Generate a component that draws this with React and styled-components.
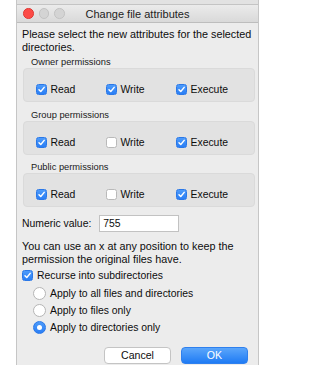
import styled, { createGlobalStyle } from "styled-components";

const Global = createGlobalStyle`
  html, body {
    margin: 0;
    padding: 0;
    background: #ffffff;
  }
  body {
    font-family: "Liberation Sans", Arial, sans-serif;
    color: #0d0d0d;
  }
`;

const Window = styled.div`
  margin-left: 16px;
  width: 243px;
  height: 365px;
  box-sizing: border-box;
  background: #ececec;
  border-left: 1px solid #c6c6c6;
  border-right: 1px solid #c6c6c6;
  display: flex;
  flex-direction: column;
`;

const TopStrip = styled.div`
  height: 4px;
  background: #e2e2e2;
  border-bottom: 1px solid #c4c4c4;
`;

const TitleBar = styled.div`
  height: 17px;
  display: flex;
  align-items: center;
  position: relative;
  background: linear-gradient(#ebebeb, #d9d9d9);
  border-bottom: 1px solid #bdbdbd;
`;

const Lights = styled.div`
  display: flex;
  gap: 5px;
  padding-left: 6px;
`;

const Light = styled.span`
  width: 10.5px;
  height: 10.5px;
  border-radius: 50%;
  box-sizing: border-box;
  background: ${(p) => (p.$red ? "#fc4b46" : "#d4d4d4")};
  border: 1px solid ${(p) => (p.$red ? "#df3a35" : "#c3c3c3")};
`;

const Title = styled.div`
  position: absolute;
  left: 0;
  right: 0;
  text-align: center;
  font-size: 11px;
  color: #222;
  pointer-events: none;
`;

const Body = styled.div`
  padding: 5px 0 0 5px;
  display: flex;
  flex-direction: column;
`;

const Para = styled.p`
  margin: ${(p) => p.$mt || 0}px 0 0;
  font-size: 10.8px;
  line-height: 13px;
  white-space: nowrap;
  color: #0d0d0d;
`;

const SectionLabel = styled.div`
  margin-top: ${(p) => p.$mt}px;
  margin-left: 9px;
  height: 11px;
  line-height: 11px;
  font-size: 9.3px;
  color: #1a1a1a;
`;

const Group = styled.div`
  margin-left: 1px;
  width: 232px;
  height: 34px;
  box-sizing: border-box;
  padding: 15px 0 0 11.5px;
  background: #e2e2e2;
  border: 1px solid #dadada;
  border-radius: 4px;
  display: grid;
  grid-template-columns: 70px 70px 70px;
  align-items: start;
`;

const Option = styled.label`
  display: flex;
  align-items: center;
  gap: 4px;
  font-size: 10.4px;
  height: ${(p) => p.$h || 11}px;
  line-height: 11px;
  white-space: nowrap;
  color: #0d0d0d;
  margin: ${(p) => p.$m || 0};
`;

const Box = styled.span`
  width: 11px;
  height: 11px;
  flex: none;
  box-sizing: border-box;
  border-radius: 2.5px;
  display: flex;
  align-items: center;
  justify-content: center;
  background: ${(p) => (p.$on ? "linear-gradient(#4d9bfa, #2a7ef5)" : "#ffffff")};
  border: 1px solid ${(p) => (p.$on ? "#2a78e8" : "#b9b9b9")};
`;

const Check = ({ on }) => (
  <Box $on={on}>
    {on && (
      <svg width="9" height="9" viewBox="0 0 10 10">
        <path d="M2.2 5.2 L4.2 7.3 L8 2.6" fill="none" stroke="#fff" strokeWidth="1.6" strokeLinecap="round" strokeLinejoin="round" />
      </svg>
    )}
  </Box>
);

const Dot = styled.span`
  width: 13px;
  height: 13px;
  flex: none;
  box-sizing: border-box;
  border-radius: 50%;
  display: flex;
  align-items: center;
  justify-content: center;
  background: ${(p) => (p.$on ? "linear-gradient(#4d9bfa, #2a7ef5)" : "#ffffff")};
  border: 1px solid ${(p) => (p.$on ? "#2a78e8" : "#b5b5b5")};
  &::after {
    content: "";
    display: ${(p) => (p.$on ? "block" : "none")};
    width: 5px;
    height: 5px;
    border-radius: 50%;
    background: #fff;
  }
`;

const NumRow = styled.div`
  margin-top: 8px;
  display: flex;
  align-items: center;
  gap: 8px;
  font-size: 10.4px;
  color: #0d0d0d;
`;

const NumInput = styled.div`
  width: 80px;
  height: 17px;
  box-sizing: border-box;
  background: #fff;
  border: 1px solid #c2c2c2;
  padding-left: 3px;
  display: flex;
  align-items: center;
  font-size: 10.4px;
`;

const Radios = styled.div`
  margin: 6px 0 0 12px;
  display: flex;
  flex-direction: column;
  gap: 4px;
`;

const Buttons = styled.div`
  margin-top: 12.5px;
  padding-right: 10px;
  display: flex;
  justify-content: flex-end;
  gap: 10px;
`;

const Button = styled.div`
  width: 67px;
  height: 17px;
  box-sizing: border-box;
  border-radius: 4px;
  display: flex;
  align-items: center;
  justify-content: center;
  font-size: 10.6px;
  color: ${(p) => (p.$primary ? "#fff" : "#0d0d0d")};
  background: ${(p) => (p.$primary ? "linear-gradient(#5ba6fb, #1f7bf4)" : "#fff")};
  border: 1px solid ${(p) => (p.$primary ? "#2f80ee" : "#c4c4c4")};
`;

const sections = [
  { label: "Owner permissions", mt: 3, values: [true, true, true] },
  { label: "Group permissions", mt: 7.5, values: [true, false, true] },
  { label: "Public permissions", mt: 7.5, values: [true, false, true] },
];

const names = ["Read", "Write", "Execute"];

export default function App() {
  return (
    <>
      <Global />
      <Window>
        <TopStrip />
        <TitleBar>
          <Lights>
            <Light $red />
            <Light />
            <Light />
          </Lights>
          <Title>Change file attributes</Title>
        </TitleBar>
        <Body>
          <Para>
            Please select the new attributes for the selected
            <br />
            directories.
          </Para>

          {sections.map((s) => (
            <div key={s.label}>
              <SectionLabel $mt={s.mt}>{s.label}</SectionLabel>
              <Group>
                {names.map((n, i) => (
                  <Option key={n}>
                    <Check on={s.values[i]} />
                    {n}
                  </Option>
                ))}
              </Group>
            </div>
          ))}

          <NumRow>
            <span>Numeric value:</span>
            <NumInput>755</NumInput>
          </NumRow>

          <Para $mt={8}>
            You can use an x at any position to keep the
            <br />
            permission the original files have.
          </Para>

          <Option $m="4px 0 0 0">
            <Check on />
            Recurse into subdirectories
          </Option>

          <Radios>
            <Option as="div" $h={13} $m="0 0 0 -1px">
              <Dot />
              Apply to all files and directories
            </Option>
            <Option as="div" $h={13} $m="0 0 0 -1px">
              <Dot />
              Apply to files only
            </Option>
            <Option as="div" $h={13} $m="0 0 0 -1px">
              <Dot $on />
              Apply to directories only
            </Option>
          </Radios>

          <Buttons>
            <Button>Cancel</Button>
            <Button $primary>OK</Button>
          </Buttons>
        </Body>
      </Window>
    </>
  );
}
